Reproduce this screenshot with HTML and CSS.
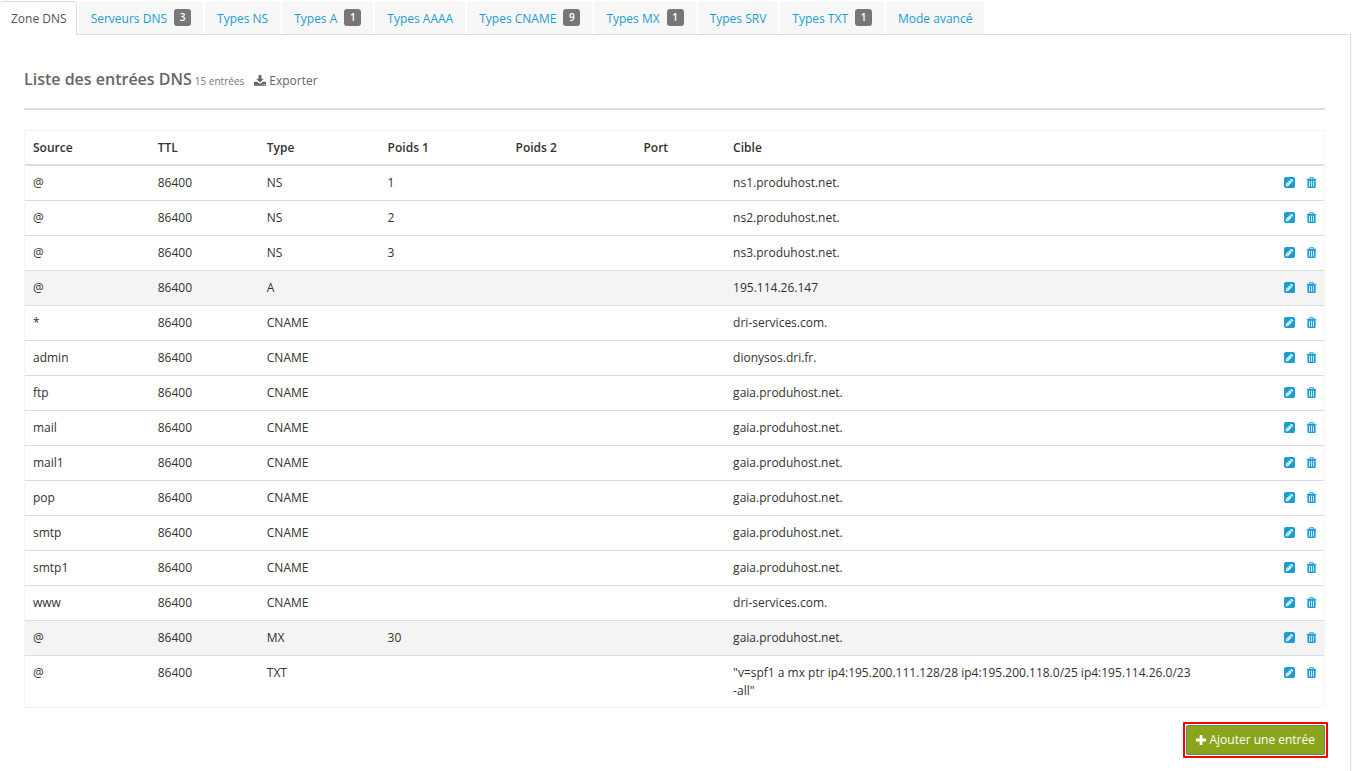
FILE: index.html
```html
<!DOCTYPE html>
<html lang="fr">
<head>
<meta charset="utf-8">
<title>Zone DNS</title>
<link rel="stylesheet" href="styles.css">
<script src="table.js" defer></script>
</head>
<body>
<svg class="sprite" aria-hidden="true">
  <symbol id="edit" viewBox="0 0 1536 1536"><path fill-rule="evenodd" d="M404 980l152 152-52 52h-56v-96h-96v-56zM787 620q14 13-3 30L493 941q-17 17-30 3-14-13 3-30l291-291q17-17 30-3zM544 1280l544-544-288-288-544 544v288h288zM1152 672l92-92q28-28 28-68t-28-68l-152-152q-28-28-68-28t-68 28l-92 92zM1536 288v960q0 119-84 204t-204 84H288q-119 0-204-84T0 1248V288Q0 169 84 84T288 0h960q119 0 204 84t84 204z"/></symbol>
  <symbol id="trash" viewBox="0 0 11 12"><path fill-rule="evenodd" d="M3.200 1.800V1.200Q3.200 0 4.400 0h2.200q1.200 0 1.200 1.200v.6h2.700q.5 0 .5.500t-.5.500H10v7.700Q10 12 8.600 12H2.400Q1 12 1 10.500V2.800H.5Q0 2.800 0 2.300t.5-.5zM4.200 1.800h2.600V.9H4.200zM2.900 4v6.500h.9V4zm2.100 0v6.500h.9V4zm2.100 0v6.500H8V4z"/></symbol>
  <symbol id="download" viewBox="0 0 13 12"><path fill-rule="evenodd" d="M5 0h3v4h2.700L6.500 8.300 2.300 4H5zM0 8q0-.6.600-.6h3L5.300 9q1.200 1 2.400 0l1.700-1.600h3q.6 0 .6.600v3q0 .6-.6.600H.600Q0 11.600 0 11zM9.300 9.800v.8h.8v-.8zm1.700 0v.8h.8v-.8z"/></symbol>
  <symbol id="plus" viewBox="0 0 10 10"><path d="M3.600.5q0-.5.500-.5h1.800q.5 0 .5.500v3.100h3.100q.5 0 .5.500v1.800q0 .5-.5.500H6.400v3.100q0 .5-.5.500H4.100q-.5 0-.5-.5V6.400H.5Q0 6.400 0 5.900V4.100q0-.5.500-.5h3.100z"/></symbol>
</svg>
<nav class="tabs">
  <a class="tab active" href="#">Zone DNS</a>
  <a class="tab" href="#">Serveurs DNS <span class="badge">3</span></a>
  <a class="tab" href="#">Types NS</a>
  <a class="tab" href="#">Types A <span class="badge">1</span></a>
  <a class="tab" href="#">Types AAAA</a>
  <a class="tab" href="#">Types CNAME <span class="badge">9</span></a>
  <a class="tab" href="#">Types MX <span class="badge">1</span></a>
  <a class="tab" href="#">Types SRV</a>
  <a class="tab" href="#">Types TXT <span class="badge">1</span></a>
  <a class="tab" href="#">Mode avancé</a>
</nav>
<main class="panel">
  <header class="heading">
    <h1>Liste des entrées DNS</h1>
    <small>15 entrées</small>
    <a class="export" href="#"><svg><use href="#download"/></svg>Exporter</a>
  </header>
  <table class="records">
    <colgroup><col class="c-source"><col class="c-ttl"><col class="c-type"><col class="c-weight"><col class="c-weight"><col class="c-port"><col class="c-target"><col></colgroup>
    <thead><tr><th>Source</th><th>TTL</th><th>Type</th><th>Poids 1</th><th>Poids 2</th><th>Port</th><th>Cible</th><th></th></tr></thead>
    <tbody id="records"></tbody>
  </table>
  <div class="footer"><div class="highlight"><button class="add" type="button"><svg><use href="#plus"/></svg>Ajouter une entrée</button></div></div>
</main>
</body>
</html>
```

FILE: styles.css
```css
* { box-sizing: border-box; }
body {
  margin: 0;
  min-height: 100vh;
  display: flex;
  flex-direction: column;
  background: #fff;
  color: #32322f;
  font: 12px/18px "Open Sans", "Trebuchet MS", sans-serif;
}
a { color: #1a9dd0; text-decoration: none; }
svg { fill: currentColor; }
.sprite { position: absolute; width: 0; height: 0; }
.tabs {
  display: flex;
  gap: 2px;
  height: 35px;
  padding-top: 1px;
  margin-right: 1px;
  border-bottom: 1px solid #ddd;
}
.tab {
  display: flex;
  align-items: center;
  gap: 7px;
  height: 33px;
  padding: 2px 12px 0;
  background: #f7f7f7;
  border-radius: 4px 4px 0 0;
  white-space: nowrap;
}
.tab.active {
  height: 34px;
  padding: 0 9px 0 11px;
  color: #555;
  background: #fff;
  border: solid #ddd;
  border-width: 1px 1px 0 0;
}
.badge {
  width: 17px;
  height: 17px;
  margin-bottom: 3px;
  border-radius: 3px;
  background: #777;
  color: #fff;
  font-size: 10px;
  font-weight: 600;
  line-height: 16px;
  text-align: center;
}
.panel {
  flex: 1;
  margin-right: 1px;
  padding: 32px 25px 12px 24px;
  border-right: 1px solid #ddd;
}
.heading {
  display: flex;
  align-items: baseline;
  height: 43px;
  margin-bottom: 20px;
  border-bottom: 2px solid #ddd;
  color: #666;
}
.heading h1 { margin: 0 3px 0 0; font-size: 16px; line-height: 24px; font-weight: 600; }
.heading small { margin-right: 10px; font-size: 10px; color: #777; }
.export { color: #666; }
.export svg { width: 12px; height: 11px; margin-right: 3px; vertical-align: -1px; }
.records {
  width: 100%;
  table-layout: fixed;
  border-collapse: separate;
  border-spacing: 0;
  border: 1px solid #f4f4f4;
}
.c-source { width: 9.600%; }
.c-ttl { width: 8.400%; }
.c-type { width: 9.300%; }
.c-weight { width: 9.850%; }
.c-port { width: 6.900%; }
.c-target { width: 37.500%; }
th { padding: 8px; text-align: left; font-weight: 600; line-height: 17px; border-bottom: 2px solid #ddd; }
td { padding: 8px; vertical-align: top; border-bottom: 1px solid #ddd; }
td:last-child { padding-right: 7px; }
tr:last-child td { padding-bottom: 7px; border-bottom: 0; }
tr.alt td { background: #f4f4f4; }
.term { white-space: nowrap; }
.actions { display: flex; justify-content: flex-end; gap: 11px; height: 17px; align-items: center; }
.actions a { display: flex; }
.actions svg { width: 11px; height: 11px; }
.footer { display: flex; justify-content: flex-end; margin: 14px -3px 0 0; }
.highlight { padding: 1px; border: 2px solid #f00; border-radius: 1px; }
.add {
  display: flex;
  align-items: center;
  gap: 3px;
  height: 30px;
  padding: 0 9px;
  border: 1px solid #6d8917;
  border-radius: 2px;
  outline: 1px dotted #4a92c8;
  outline-offset: -1px;
  background: #8aa41c;
  color: #fff;
  font: 12px/18px "Open Sans", "Trebuchet MS", sans-serif;
}
.add svg { width: 10px; height: 10px; }
```

FILE: table.js
```js
const records = [
  ["@", "NS", "1", "ns1.produhost.net."],
  ["@", "NS", "2", "ns2.produhost.net."],
  ["@", "NS", "3", "ns3.produhost.net."],
  ["@", "A", "", "195.114.26.147"],
  ["*", "CNAME", "", "dri-services.com."],
  ["admin", "CNAME", "", "dionysos.dri.fr."],
  ["ftp", "CNAME", "", "gaia.produhost.net."],
  ["mail", "CNAME", "", "gaia.produhost.net."],
  ["mail1", "CNAME", "", "gaia.produhost.net."],
  ["pop", "CNAME", "", "gaia.produhost.net."],
  ["smtp", "CNAME", "", "gaia.produhost.net."],
  ["smtp1", "CNAME", "", "gaia.produhost.net."],
  ["www", "CNAME", "", "dri-services.com."],
  ["@", "MX", "30", "gaia.produhost.net."],
  ["@", "TXT", "", "\"v=spf1 a mx ptr ip4:195.200.111.128/28 ip4:195.200.118.0/25 ip4:195.114.26.0/23 <span class=\"term\">-all\"</span>"]
];
const actions = `<div class="actions"><a href="#" aria-label="Modifier"><svg><use href="#edit"/></svg></a><a href="#" aria-label="Supprimer"><svg><use href="#trash"/></svg></a></div>`;
document.getElementById("records").innerHTML = records.map(([source, type, weight, target]) =>
  `<tr class="${type === "A" || type === "MX" ? "alt" : ""}"><td>${source}</td><td>86400</td><td>${type}</td><td>${weight}</td><td></td><td></td><td>${target}</td><td>${actions}</td></tr>`
).join("");
```
